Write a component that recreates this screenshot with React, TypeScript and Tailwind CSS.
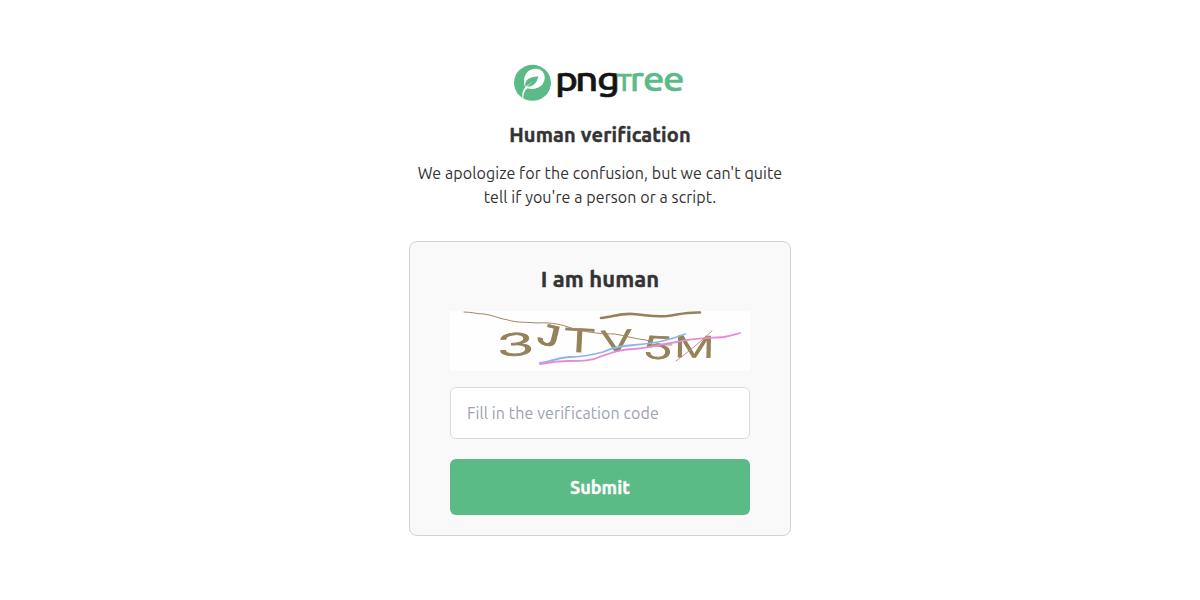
import React, { useState } from "react";

const Logo: React.FC = () => (
  <svg
    width="174"
    height="38"
    viewBox="0 0 174 38"
    className="block overflow-visible"
    role="img"
    aria-label="pngtree"
  >
    <ellipse cx="19.500" cy="18.800" rx="18.500" ry="18" fill="#5bbb87" />
    <path
      d="M9.500 34.500C9 29 9.800 26 12.300 23.500C10 18 10.800 11 15 7.500C19 4 26.500 3.500 29.700 7.800C33 12 32 18 28.500 21.300C24.500 25 19 25.500 14.500 24.300C12 26 10.500 29 10.300 34.500Z"
      fill="#fff"
    />
    <path
      d="M12.300 22.500C11.500 16.500 15.500 13 25.300 12.300C23.800 19.500 19.500 23.300 14 22.500L20 17.200L12.500 22.800Z"
      fill="#5bbb87"
    />
    <g
      fontFamily="Ubuntu, 'Noto Sans', sans-serif"
      fontSize="33"
      fontWeight="500"
      strokeWidth="0.500"
    >
      <g fill="#151515" stroke="#151515">
        <text x="42" y="27" textLength="23" lengthAdjust="spacingAndGlyphs">
          p
        </text>
        <text x="62" y="27" textLength="23.500" lengthAdjust="spacingAndGlyphs">
          n
        </text>
        <text x="84" y="27" textLength="23" lengthAdjust="spacingAndGlyphs">
          g
        </text>
      </g>
      <g fill="#5bbb87" stroke="#5bbb87">
        <text
          x="103.500"
          y="27"
          fontSize="25"
          textLength="15.500"
          lengthAdjust="spacingAndGlyphs"
        >
          T
        </text>
        <text x="117" y="27" textLength="14" lengthAdjust="spacingAndGlyphs">
          r
        </text>
        <text x="130" y="27" textLength="21.500" lengthAdjust="spacingAndGlyphs">
          e
        </text>
        <text x="150" y="27" textLength="21.500" lengthAdjust="spacingAndGlyphs">
          e
        </text>
      </g>
    </g>
  </svg>
);

const CodeImage: React.FC = () => (
  <div className="h-[60px] w-[300px] bg-[#fefefe]">
    <svg
      width="300"
      height="60"
      viewBox="0 0 300 60"
      className="block blur-[0.6px]"
    >
      <g
        fill="#94825a"
        stroke="#94825a"
        strokeWidth="0.800"
        fontFamily="Inter, 'Noto Sans', sans-serif"
        fontWeight="300"
        fontSize="32"
      >
        <text transform="translate(47 45.500) rotate(-3) scale(1.95 0.96)">
          3
        </text>
        <text
          transform="translate(83 31) rotate(14) scale(1.5 1.05)"
          fontFamily="'Liberation Mono', monospace"
          fontSize="30"
        >
          J
        </text>
        <text transform="translate(112 40) rotate(3) scale(1.65 1)">T</text>
        <text transform="translate(151 41) rotate(-3) scale(1.5 0.9)">V</text>
        <text transform="translate(192 47) rotate(3) scale(1.6 0.97)">5</text>
        <text transform="translate(224 46) rotate(1) scale(1.4 0.92)">M</text>
      </g>
      <g fill="none" strokeLinecap="round" strokeLinejoin="round">
        <path
          d="M14 1C22 1 27 3 34 3C43 4 50 8 58 9C67 12 78 11 87 12C103 11 113 14 124 18C140 22 154 23 165 23C177 25 185 28 196 29C208 33 213 34 222 34"
          stroke="#a8835f"
          strokeWidth="1"
        />
        <path
          d="M151 7C162 6 171 2 183 3C197 4 202 6 217 5C231 3 237 1 250 1.500"
          stroke="#94825a"
          strokeWidth="2.600"
        />
        <path
          d="M90 52C99 51 105 47 119 46C132 46 142 44 153 41C164 36 172 35 184 34C201 33 218 30 235 23"
          stroke="#8ab6ef"
          strokeWidth="1.800"
        />
        <path
          d="M90 53C100 51 107 50 119 50C132 50 142 50 152 45C164 41 171 38 184 38C202 36 212 33 227 31C242 27 262 27 274 26C281 25 286 23 290 22"
          stroke="#e98bd2"
          strokeWidth="1.800"
        />
        <path d="M226 50C238 41 249 32 262 20" stroke="#c6937f" strokeWidth="1" />
      </g>
    </svg>
  </div>
);

const App: React.FC = () => {
  const [code, setCode] = useState<string>("");

  return (
    <main className="flex min-h-screen flex-col items-center bg-white pt-16 font-[Ubuntu,'Noto_Sans',sans-serif] text-[#333]">
      <Logo />

      <h1 className="mt-[18px] text-[20px] leading-[30px] font-bold tracking-[0.15px] whitespace-nowrap [-webkit-text-stroke:0.4px]">
        Human verification
      </h1>

      <p className="mt-[11px] text-center text-[16px] leading-6 tracking-[0.08px] whitespace-nowrap">
        We apologize for the confusion, but we can't quite
        <br />
        tell if you're a person or a script.
      </p>

      <form
        onSubmit={(e) => e.preventDefault()}
        className="mt-8 flex h-[295px] w-[382px] flex-col items-center rounded-lg border border-[#d2d2d2] bg-[#f9f9f9] pt-5"
      >
        <h2 className="mb-4 text-[22px] leading-[33px] font-bold tracking-[0.1px] [-webkit-text-stroke:0.4px]">
          I am human
        </h2>

        <CodeImage />

        <input
          type="text"
          value={code}
          onChange={(e) => setCode(e.target.value)}
          placeholder="Fill in the verification code"
          className="mt-4 h-[52px] w-[300px] rounded-md border border-[#d9d9dc] bg-white px-4 text-[16px] tracking-[0.1px] outline-none placeholder:text-[#9ca3af]"
        />

        <button
          type="submit"
          className="mt-5 h-14 w-[300px] cursor-pointer rounded-md bg-[#5bbb87] text-[18px] font-bold text-white [-webkit-text-stroke:0.3px]"
        >
          Submit
        </button>
      </form>
    </main>
  );
};

export default App;
